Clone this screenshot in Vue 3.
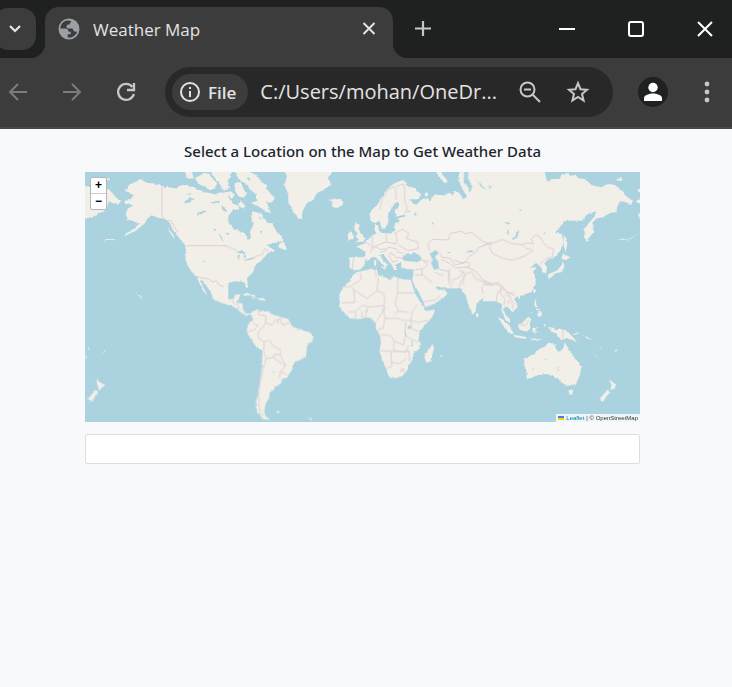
<script setup>
import { ref } from 'vue'

const address = ref('C:/Users/mohan/OneDr...')
const result = ref('')

// Each sheet has its own origin on the 1665 x 750 world canvas.
const sheets = [
  {
    name: 'north-west america',
    at: 'translate(0 -6)',
    land: [
      'M-9 48L20 50 62 52 80 66 92 82 108 92 101 103 84 100 71 94 66 113 55 125 40 130 25 142-9 147Z',
      'M64 25L75 26 74 31 66 31Z',
      'M120 60L135 42 150 38 165 27 185 38 215 42 240 50 270 55 290 46 310 45 330 54 350 62 370 68 385 72 430 65 430 394 389 394 384 380 373 359 360 342 350 331 345 330 354 350 366 374 360 372 346 345 335 321 325 312 310 290 301 268 303 240 300 225 290 212 275 196 265 181 254 158 240 147 220 143 200 136 188 145 178 162 155 180 122 197 112 199 140 181 158 166 166 159 154 160 148 154 130 150 122 132 128 116 145 106 119 99 120 92 138 86 146 76Z',
      'M298 0L318 0 321 12 330 22 313 27 305 20Z',
      'M330 24L346 16 358 8 372 12 382 26 396 38 392 54 378 60 360 50 340 42Z',
      'M376 0L430 0 430 60 412 56 400 34 384 20Z',
      'M248 172L258 186 264 192 270 208 262 198 252 184Z',
      'M60 207L92 207 92 209 62 210Z',
      'M150 370L160 373 172 382 164 379Z'
    ],
    water: [
      'M298 92L312 84 330 87 318 92 314 99 300 100Z',
      'M335 130L352 122 364 123 350 132 338 137Z',
      'M350 62L368 66 360 70Z',
      'M402 190L410 198 417 216 410 210Z',
      'M303 72L322 70 314 75Z',
      'M352 272L358 274 354 277Z',
      'M385 176L395 178 390 184Z',
      'M375 98L400 92 405 95 382 101Z',
      'M410 105L425 120 425 128 408 114Z'
    ],
    lines: [
      'M231 48V140L245 152 258 152 268 170 278 186',
      'M307 227H424',
      'M333 319L350 324 370 326 384 336 394 332 404 346 416 350'
    ]
  },
  {
    name: 'north-east america',
    at: 'translate(420 -6)',
    land: [
      'M-5 78L10 82 22 98 40 108 44 120 26 116 10 135 8 155 25 175 44 184 60 190 68 210 78 205 75 185 85 165 78 145 82 124 105 130 118 145 128 158 140 160 155 185 173 202 175 213 150 219 124 225 132 231 142 236 150 243 130 250 120 258 110 270 90 288 85 305 66 325 70 352 64 354 57 336 30 334 0 341-5 358Z',
      'M-5 0L22 0 18 20 6 34 14 52-5 64Z',
      'M30 0L62 0 78 8 95 15 108 34 124 47 130 64 150 84 140 98 124 94 138 130 126 126 112 116 95 108 78 98 98 92 92 72 74 58 66 42 48 34 34 16Z',
      'M30 40L46 36 56 56 64 74 54 84 40 78 30 62Z',
      'M38 98L48 94 62 108 56 116 44 110Z',
      'M4 70L18 62 28 76 20 88Z',
      'M175 0L186 18 178 45 190 65 190 95 205 125 222 145 230 145 232 125 245 100 265 90 275 70 300 58 320 42 308 25 326 0Z',
      'M310 90L325 96 318 104 335 114 346 110 354 102 348 88 330 90 318 88Z',
      'M158 232L166 220 176 214 186 240 172 238Z',
      'M52 374L64 368 80 374 98 384 84 381 66 374Z'
    ],
    water: [
      'M36 246L52 240 62 250 50 252Z',
      'M38 254L44 254 43 270 38 268Z',
      'M54 252L64 256 60 268Z',
      'M58 270L78 264 90 262 82 268 62 272Z',
      'M104 182L112 184 108 190Z',
      'M0 188L14 190 8 194Z',
      'M100 140L110 144 104 147Z',
      'M64 22L78 28 72 32Z'
    ],
    lines: ['M-5 226L20 234 36 242M78 266L100 256 112 254 116 240 124 236 130 248']
  },
  {
    name: 'europe and west asia',
    at: 'translate(750 -6)',
    land: [
      'M60 158L75 165 70 178 80 190 90 206 86 215 62 217 72 208 62 200 68 190 58 180Z',
      'M45 184L58 190 55 207 40 210 38 195Z',
      'M105 130L115 115 124 108 135 90 144 74 155 60 175 42 200 31 216 38 212 46 240 55 259 74 250 88 225 88 235 101 244 104 262 86 280 85 284 92 300 74 330 76 342 68 352 74 362 62 372 68 385 88 396 80 384 60 374 40 370 20 376 0 480 0 480 350 240 350 232 330 238 298 215 298 198 292 200 278 190 280 180 285 186 300 178 300 170 284 158 270 144 252 134 254 146 274 160 284 154 298 146 286 132 272 122 262 112 262 95 270 88 284 75 299 60 300 43 295 45 262 85 262 92 255 90 245 75 235 63 230 85 222 100 208 110 198 125 190 118 180 120 165 130 168 132 188 160 190 178 182 180 160 194 152 188 146 215 138 208 134 182 140 178 128 190 108 188 94 176 106 160 130 158 145 162 155 150 175 140 176 134 152 120 160 106 150Z',
      'M118 270L124 270 123 288 117 286Z',
      'M138 292L152 292 150 299Z',
      'M0 90L16 86 24 98 12 108-6 112-6 92Z',
      'M302 0L318 0 322 14 340 34 330 40 312 22Z',
      'M268 72L276 66 280 76 272 80Z'
    ],
    water: [
      'M200 266L212 250 230 254 234 246 244 250 260 264 258 273 235 275 208 272Z',
      'M285 250L300 240 312 248 300 260 310 278 312 297 296 298 288 280 292 270Z',
      'M216 120L224 124 220 130Z',
      'M396 244L414 240 410 246 398 248Z',
      'M388 0L396 0 400 30 412 50 404 70 398 50 386 34Z',
      'M236 132L244 126 246 132 240 138Z',
      'M336 246L346 244 342 252Z',
      'M424 28L440 44 452 60 438 50Z',
      'M288 160L296 156 294 164Z'
    ],
    lines: [
      'M134 118L142 86 160 58 176 50 182 62 184 90M182 50L206 42 210 60 208 90 216 112 210 132',
      'M56 264L52 296M88 264L94 268M92 216L108 228 112 236 106 246M112 198L112 226 136 238 154 236',
      'M154 190L154 216 140 220 112 234M154 216L184 222 186 206 180 190 202 178 222 190 214 206 248 216 250 236 218 242 190 224',
      'M136 246L152 242 160 232 184 236 188 246 206 250M162 262L166 248 184 262 200 264M166 262L172 276 188 272',
      'M282 240L280 220 292 208 340 210 346 190 378 184 394 192 410 186 440 212 470 226',
      'M316 250L320 262 344 264 360 284 386 280 400 262 424 244 428 234 470 218M318 268L344 280 362 294 404 290 400 276 376 278 358 270',
      'M240 300L264 296 278 284 262 270 284 276M312 298L340 304 344 330 360 346M372 300L388 310 384 344M390 290L420 302 444 330 470 342'
    ]
  },
  {
    name: 'east asia',
    at: 'translate(1200 -6)',
    land: [
      'M-6 0L178 0 184 28 194 36 196 28 225 26 230 12 250 10 256 18 272 14 280 25 302 28 320 46 350 52 365 42 390 45 415 65 424 80 444 92 438 105 415 94 402 98 394 118 396 126 370 130 355 142 335 145 322 158 328 185 318 196 305 213 298 200 298 178 312 158 330 138 334 124 315 130 300 142 290 152 240 152 225 170 210 188 230 192 236 215 226 242 205 265 190 268 178 280 186 292 183 308 172 308 170 294 160 285 155 278 135 290 154 294 144 305 150 320 152 345 140 365 115 375 95 380 80 394-6 394Z',
      'M236 194L243 200 247 222 242 246 236 226Z',
      'M234 250L256 262 242 271 230 266Z',
      'M234 274L238 290 232 306 212 310 196 324 188 326 190 312 215 302 228 288Z',
      'M147 357L153 360 149 370 144 366Z',
      'M394 28L408 24 412 30 398 33Z',
      'M458 57L475 57 475 68 460 66Z',
      'M475 82L460 88 452 95 475 106Z',
      'M459 130L468 132 468 146 461 143Z',
      'M400 208L432 206 460 192 434 208 404 210Z'
    ],
    water: [
      'M80 208L92 196 100 180 103 186 98 198 86 209Z',
      'M102 118L112 120 108 126Z',
      'M56 156L72 158 70 164Z',
      'M174 190L184 186 178 193Z',
      'M66 176L70 180 72 196 68 192Z',
      'M10 46L22 50 14 56Z'
    ],
    lines: [
      'M-6 226L12 220 34 216 52 208 78 220 112 224 126 218 146 222 138 206 150 196 162 196 174 216 188 232 206 236 202 262 186 264 164 282',
      'M12 228L22 250 56 266 84 270 120 258 144 240 126 236 112 224',
      'M-6 344L20 346 42 338 54 352 38 366 34 392M54 352L72 370 90 376'
    ]
  },
  {
    name: 'pacific',
    at: 'translate(0 369)',
    land: [
      'M34 250L43 261 60 268 51 281 43 286 37 272Z',
      'M32 284L42 290 29 307 21 320 6 315Z',
      'M8 156L14 162 8 164Z',
      'M52 170L62 164 56 174Z',
      'M-4 180L10 190-4 186Z',
      'M165 5L172 7 167 10Z'
    ],
    water: [],
    lines: []
  },
  {
    name: 'south america',
    at: 'translate(420 369)',
    land: [
      'M-40-20L0-20 0 12 24 12 32-2 46-2 42 10 34 22 52 26 54 44 62 56 76 56 84 50 98 42 104 48 125 48 148 60 175 68 190 72 198 92 230 105 255 112 265 125 262 138 247 150 243 180 232 192 210 200 200 225 185 248 170 252 168 266 150 274 146 286 135 290 132 310 122 325 118 345 120 360 135 375 115 372 95 350 92 325 100 290 108 240 112 190 112 168 90 150 70 120 65 105 70 88 84 76 80 60 62 62 44 50 34 38 14 30-10 24-38 8Z',
      'M76 8L88 10 86 14Z',
      'M98 10L114 9 124 15 104 16Z',
      'M150 350L166 348 160 354Z',
      'M250 366L262 372 258 375Z'
    ],
    water: ['M140 228L150 229 146 232Z'],
    lines: [
      'M104 44L100 58 124 64 122 84 116 92 100 112 100 130 118 140 116 168 124 190 114 222 106 260 100 300 104 350 118 364',
      'M70 110L88 104 98 92 84 84M122 84L140 90 150 76 166 72 172 90 192 84M160 72L158 86',
      'M118 140L134 136 144 152 166 164 166 180 148 178 146 188 124 190M166 180L182 212 166 230 164 248M148 190L170 206 182 212M166 230L186 240',
      'M22 14L28 30M34 22L44 42'
    ]
  },
  {
    name: 'africa and south asia',
    at: 'translate(750 279)',
    land: [
      'M64 22L90 15 125 12 130 30 150 36 166 46 175 35 200 42 228 45 232 60 240 85 255 110 268 132 275 138 300 133 295 150 282 168 268 182 255 200 250 215 257 235 255 250 235 265 230 290 220 300 218 315 200 335 180 338 165 340 158 325 145 290 133 260 138 235 135 210 122 190 122 172 105 158 90 158 75 162 45 160 30 145 12 125 15 110 12 90 25 65 45 48 50 35Z',
      'M236 10L236 55 250 80 264 108 270 128 300 115 325 100 338 84 326 72 310 75 302 66 292 50 300 56 318 68 330 66 336 70 375 70 384 80 392 90 400 120 412 148 422 140 425 115 455 90 472 84 472 10Z',
      'M292 236L297 250 286 290 274 294 268 276 274 258 286 248Z',
      'M424 143L432 150 428 157 422 153Z',
      'M314 275L322 272 330 271 318 276Z'
    ],
    water: ['M218 184L228 182 228 190 219 192Z', 'M208 200L212 202 214 216 210 212Z', 'M228 230L232 232 233 246 229 242Z'],
    lines: [
      'M76 24L78 44 42 66 26 66M50 66L56 74 60 112 20 114M56 74L96 100 126 78 130 40',
      'M120 16L124 36M126 78L144 84 150 100 146 122 98 126 96 142M188 42V84H240M188 84L180 116 190 134 178 148',
      'M100 126L84 120 60 140 40 142M60 140L64 158M80 138L82 160M92 134V158M148 124L142 142 124 168',
      'M150 124L146 146 152 160 188 160 206 166 228 166 232 140 246 118M150 160L144 190 128 194',
      'M186 138L222 142M228 166L250 172 280 166M228 166L230 190 256 202M212 172L210 206 222 220 250 232',
      'M138 208L166 212 180 230 206 240 210 214M176 230V256L214 262 220 240M136 258L200 260 222 258 224 290',
      'M168 262L170 304 156 310M170 292L194 296 216 278M196 314L206 310 208 318 198 320Z',
      'M240 30L264 30 292 54M262 30L260 10M266 110L300 106 316 90M300 22L324 32',
      'M344 10L340 48 350 68M352 46L374 36 388 14M372 66L380 44 396 24 412 20 420 40 454 54 470 58M440 64L444 86'
    ]
  },
  {
    name: 'oceania',
    at: 'translate(1200 324)',
    land: [
      'M-6-6L152-6 150 15 140 30 115 40 95 44 82 44 80 52 95 65 98 82 82 97 74 88 60 78 55 86 62 105 75 118 75 128 64 122 52 100 50 72 40 68 35 50 22 42 8 44-6 50Z',
      'M98 50L106 52 102 58Z',
      'M38 111L55 119 72 136 86 157 82 164 66 153 52 133Z',
      'M84 164L105 167 125 172 122 177 90 172Z',
      'M98 134L112 130 130 110 139 118 134 132 136 144 125 155 104 149Z',
      'M142 145L160 141 150 149 160 160 150 154 148 161 143 156Z',
      'M147 57L154 60 153 72 159 82 150 78Z',
      'M160 98L169 94 172 106 164 112 156 104Z',
      'M152 86L160 88 168 92 156 94Z',
      'M144 96L136 106 138 100Z',
      'M132 176L148 176 172 177 158 182 138 179Z',
      'M176 132L182 136 178 142Z',
      'M190 141L205 143 215 151 226 145 250 157 262 170 276 184 262 181 245 174 235 179 220 173 214 162 198 154Z',
      'M262 164L276 158 286 156 272 165Z',
      'M118 235L150 222 158 210 168 204 180 200 190 188 213 192 208 205 225 215 235 205 240 186 250 210 262 222 270 236 284 250 288 265 285 285 272 312 245 317 228 306 218 294 208 292 190 282 160 285 145 292 125 297 125 275 118 255Z',
      'M250 330L265 331 262 342 254 345Z',
      'M369 296L380 307 396 314 387 327 376 330 380 315Z',
      'M367 329L377 335 363 351 353 366 342 357 355 344Z',
      'M330 226L344 234 340 235Z',
      'M388 212L400 208 392 216Z',
      'M292 164L308 172 324 182 304 174Z',
      'M342 202L352 208 346 206Z'
    ],
    water: ['M176 236L186 236 184 239Z'],
    lines: [
      'M234 148V176M104 134L122 136 132 120',
      'M-6 8L20 14 30 8 52 24 44 38 60 58 56 76M52 24L66 40 86 38M60 46L74 48 80 62 92 74M68 74L70 62 84 76 82 88',
      'M214 262H222M216 270H224M140 268H148'
    ]
  }
]
</script>

<template>
  <div class="window">
    <header class="browser">
      <div class="tab-strip">
        <button class="tab-search" aria-label="Search tabs">
          <svg width="16" height="16" viewBox="0 0 16 16"><path d="M3 5l5 5 5-5" fill="none" stroke="#e6e6e6" stroke-width="2.200" /></svg>
        </button>
        <div class="tab">
          <svg class="globe" width="22" height="22" viewBox="0 0 22 22">
            <circle cx="11" cy="11" r="10.500" fill="#9aa0a6" />
            <path d="M9 2.500C4.800 3.300 2.300 7 2.300 10.600l4.700 0c2.200 0 3.500 1.300 3.500 3.200h2.200v2.400h-3v3.300c4.500.7 8.700-2.300 9.700-6.300-1.100.8-2.800.8-3.700-.4-.9-1-.5-2.200-1.800-2.200h-3.400c-1.300 0-2-1-2-2.100 0-1.500 1-2.100 2.200-2.100h1.200c0-1.700.7-2.400 2-2.800C12.300 2.700 10.500 2.300 9 2.500Z" fill="#3c3c3c" />
          </svg>
          <span class="tab-title">Weather Map</span>
          <button class="icon-button" aria-label="Close tab">
            <svg width="14" height="14" viewBox="0 0 14 14"><path d="M1.500 1l11 11M12.500 1l-11 11" stroke="#e3e3e3" stroke-width="2" /></svg>
          </button>
        </div>
        <button class="icon-button new-tab" aria-label="New tab">
          <svg width="16" height="16" viewBox="0 0 16 16"><path d="M8 0v15M0 7.500h16" stroke="#c7c7c7" stroke-width="2.200" /></svg>
        </button>
        <div class="window-controls">
          <button class="icon-button" aria-label="Minimize">
            <svg width="16" height="16" viewBox="0 0 16 16"><path d="M0 8h16" stroke="#fff" stroke-width="2" /></svg>
          </button>
          <button class="icon-button" aria-label="Maximize">
            <svg width="16" height="16" viewBox="0 0 16 16"><rect x="1" y="1" width="14" height="14" rx="2" fill="none" stroke="#fff" stroke-width="2" /></svg>
          </button>
          <button class="icon-button" aria-label="Close window">
            <svg width="16" height="16" viewBox="0 0 16 16"><path d="M1 1l14 14M15 1L1 15" stroke="#fff" stroke-width="2" /></svg>
          </button>
        </div>
      </div>

      <div class="toolbar">
        <nav class="nav-buttons" aria-label="History">
          <button class="icon-button" aria-label="Back">
            <svg width="20" height="20" viewBox="0 0 20 20"><path d="M19 10H2M10 2l-8 8 8 8" fill="none" stroke="#7c7c7c" stroke-width="2" /></svg>
          </button>
          <button class="icon-button" aria-label="Forward">
            <svg width="20" height="20" viewBox="0 0 20 20"><path d="M1 10h17M10 2l8 8-8 8" fill="none" stroke="#7c7c7c" stroke-width="2" /></svg>
          </button>
          <button class="icon-button" aria-label="Reload">
            <svg width="20" height="20" viewBox="0 0 20 20">
              <path d="M16.500 5A8 8 0 1 0 17.900 12" fill="none" stroke="#c7c7c7" stroke-width="2.300" />
              <path d="M18 1v7h-7" fill="none" stroke="#c7c7c7" stroke-width="2.300" />
            </svg>
          </button>
        </nav>
        <div class="omnibox">
          <button class="file-chip">
            <svg width="20" height="20" viewBox="0 0 20 20">
              <circle cx="10" cy="10" r="9" fill="none" stroke="#e3e3e3" stroke-width="2" />
              <path d="M10 9v6M10 5v2" stroke="#e3e3e3" stroke-width="2" />
            </svg>
            File
          </button>
          <input v-model="address" class="address" type="text" aria-label="Address" />
          <button class="icon-button" aria-label="Zoom">
            <svg width="22" height="22" viewBox="0 0 22 22">
              <circle cx="8.500" cy="8.500" r="7" fill="none" stroke="#c7c7c7" stroke-width="2" />
              <path d="M13.500 13.500l7.500 7.500M5 8.500h7" stroke="#c7c7c7" stroke-width="2" />
            </svg>
          </button>
          <button class="icon-button star" aria-label="Bookmark">
            <svg width="24" height="24" viewBox="0 0 24 24"><path d="M12 3.200l2.500 6 6.500.5-5 4.300 1.600 6.500L12 17l-5.600 3.500L8 14 3 9.700l6.500-.5z" fill="none" stroke="#c7c7c7" stroke-width="2" /></svg>
          </button>
        </div>
        <button class="icon-button profile" aria-label="Profile">
          <svg width="30" height="30" viewBox="0 0 30 30">
            <circle cx="15" cy="15" r="15" fill="#1f2120" />
            <circle cx="15" cy="10.500" r="4.700" fill="#fff" />
            <path d="M6 24v-3c0-2.800 5.500-4.500 9-4.500s9 1.700 9 4.500v3z" fill="#fff" />
          </svg>
        </button>
        <button class="icon-button" aria-label="Menu">
          <svg width="6" height="22" viewBox="0 0 6 22" fill="#c7c7c7"><circle cx="3" cy="3" r="2.400" /><circle cx="3" cy="11" r="2.400" /><circle cx="3" cy="19" r="2.400" /></svg>
        </button>
      </div>
    </header>

    <main class="page">
      <h1 class="heading">Select a Location on the Map to Get Weather Data</h1>
      <section class="map" aria-label="World map">
        <svg class="world" viewBox="0 0 1665 750" preserveAspectRatio="xMidYMid slice">
          <defs>
            <filter id="coast" x="0" y="0" width="1665" height="750" filterUnits="userSpaceOnUse">
              <feTurbulence type="fractalNoise" baseFrequency="0.09" numOctaves="2" seed="4" />
              <feDisplacementMap in="SourceGraphic" scale="8" xChannelSelector="R" yChannelSelector="G" />
            </filter>
          </defs>
          <g filter="url(#coast)">
            <g v-for="sheet in sheets" :key="sheet.name" :transform="sheet.at">
              <path v-for="d in sheet.land" :key="d" :d="d" class="land" />
            </g>
            <g v-for="sheet in sheets" :key="sheet.name" :transform="sheet.at">
              <path v-for="d in sheet.water" :key="d" :d="d" class="water" />
            </g>
          </g>
          <g v-for="sheet in sheets" :key="sheet.name" :transform="sheet.at">
            <path v-for="d in sheet.lines" :key="d" :d="d" class="border-line" />
          </g>
        </svg>
        <div class="zoom-control">
          <button aria-label="Zoom in">+</button>
          <button aria-label="Zoom out">−</button>
        </div>
        <div class="attribution">
          <svg width="6" height="4" viewBox="0 0 6 4"><path fill="#4c7be1" d="M0 0h6v2H0z" /><path fill="#ffd500" d="M0 2h6v2H0z" /></svg>
          <a href="#leaflet">Leaflet</a> | © OpenStreetMap
        </div>
      </section>
      <input v-model="result" class="result" type="text" aria-label="Weather data" readonly />
    </main>
  </div>
</template>

<style>
body {
  margin: 0;
  background: #f8f9fb;
}
</style>

<style scoped>
.window {
  font-family: "Open Sans", "Noto Sans", sans-serif;
  color: #212529;
}

button,
input {
  font: inherit;
  margin: 0;
  padding: 0;
  border: 0;
  background: none;
  box-sizing: border-box;
}

svg {
  display: block;
  flex: none;
}

.icon-button {
  display: flex;
  align-items: center;
  justify-content: center;
}

.browser {
  background: #3c3c3c;
  border-bottom: 2px solid #494949;
}

.tab-strip {
  display: flex;
  align-items: center;
  height: 58px;
  background: #1f2120;
}

.tab-search {
  display: flex;
  align-items: center;
  justify-content: center;
  width: 42px;
  height: 42px;
  margin-left: -6px;
  border-radius: 14px;
  background: #3c3c3c;
}

.tab {
  position: relative;
  display: flex;
  align-items: center;
  align-self: flex-end;
  box-sizing: border-box;
  width: 348px;
  height: 51px;
  margin-left: 9px;
  padding: 0 17px 8px 13px;
  border-radius: 14px 14px 0 0;
  background: #3c3c3c;
}

.tab::before,
.tab::after {
  content: "";
  position: absolute;
  bottom: 0;
  width: 14px;
  height: 14px;
}

.tab::before {
  left: -14px;
  background: radial-gradient(circle at 0 0, transparent 14px, #3c3c3c 14px);
}

.tab::after {
  right: -14px;
  background: radial-gradient(circle at 100% 0, transparent 14px, #3c3c3c 14px);
}

.tab-title {
  flex: 1;
  padding: 2px 0 0 13px;
  font-size: 17px;
  line-height: 24px;
  color: #e3e3e3;
}

.new-tab {
  margin-left: 22px;
}

.window-controls {
  display: flex;
  gap: 53px;
  margin-left: auto;
  padding-right: 19px;
}

.toolbar {
  display: flex;
  align-items: center;
  height: 69px;
  padding: 0 22px 1px 8px;
  box-sizing: border-box;
}

.nav-buttons {
  display: flex;
  gap: 34px;
}

.omnibox {
  display: flex;
  flex: 1;
  align-items: center;
  height: 50px;
  min-width: 0;
  margin-left: 29px;
  padding: 0 23px 0 7px;
  box-sizing: border-box;
  border-radius: 25px;
  background: #282828;
}

.file-chip {
  display: flex;
  align-items: center;
  gap: 8px;
  height: 36px;
  padding: 0 12px 0 8px;
  border-radius: 18px;
  background: #3c3c3c;
  font-size: 17px;
  font-weight: 600;
  color: #e3e3e3;
}

.address {
  flex: 1;
  min-width: 0;
  margin-left: 12px;
  font-size: 20px;
  line-height: 28px;
  color: #e3e3e3;
}

.star {
  margin-left: 25px;
}

.profile {
  margin: 0 36px 0 25px;
}

.page {
  display: flex;
  flex-direction: column;
  padding: 10px 92px 0 85px;
}

.heading {
  margin: 0 0 9px;
  font-family: "Noto Sans", "Open Sans", sans-serif;
  font-size: 15px;
  font-weight: 500;
  line-height: 24px;
  text-align: center;
}

.map {
  position: relative;
  height: 250px;
  overflow: hidden;
  background: #aad3df;
}

.world {
  width: 100%;
  height: 100%;
}

.land {
  fill: #f2efe9;
}

.water {
  fill: #aad3df;
}

.border-line {
  fill: none;
  stroke: #dccfd4;
  stroke-width: 3px;
}

.zoom-control {
  position: absolute;
  top: 5px;
  left: 5px;
  display: flex;
  flex-direction: column;
  width: 17px;
  box-sizing: border-box;
  border: 1px solid #b4b8b9;
  border-radius: 2px;
  background: #fff;
}

.zoom-control button {
  height: 15px;
  font: bold 12px/15px "Liberation Sans", sans-serif;
  color: #000;
}

.zoom-control button + button {
  height: 16px;
  border-top: 1px solid #ccc;
}

.attribution {
  position: absolute;
  right: 0;
  bottom: 0;
  display: flex;
  align-items: center;
  gap: 2px;
  padding: 0 2px;
  background: rgba(255, 255, 255, 0.8);
  font: 6px/8px "Liberation Sans", sans-serif;
  color: #333;
}

.attribution a {
  color: #0078a8;
  text-decoration: none;
}

.result {
  width: 100%;
  height: 30px;
  margin-top: 12px;
  padding: 0 8px;
  border: 1px solid #dcdee0;
  border-radius: 2px;
  background: #fff;
  font-size: 14px;
}
</style>
